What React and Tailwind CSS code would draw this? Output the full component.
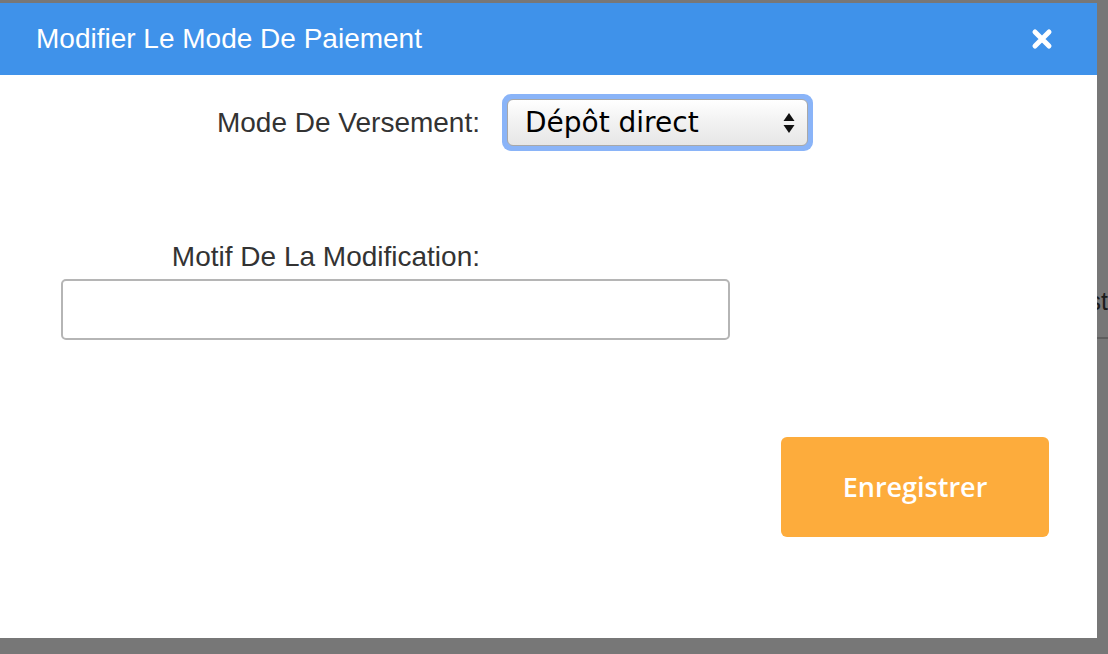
export default function App() {
  return (
    <div className="flex h-[654px] w-[1108px] overflow-hidden bg-[#777777]" style={{ fontFamily: '"Liberation Sans", Arial, sans-serif' }}>
      <div className="mt-[3px] flex h-[635px] w-[1097px] shrink-0 flex-col bg-white">
        <div className="flex h-[72px] items-center justify-between bg-[#3f92ea] pl-[36px] pr-[44px]">
          <h1 className="text-[28px] text-white">Modifier Le Mode De Paiement</h1>
          <svg width="22" height="22" viewBox="0 0 22 22">
            <path d="M4 4 L18 18 M18 4 L4 18" stroke="white" strokeWidth="5" strokeLinecap="round" />
          </svg>
        </div>
        <div className="flex flex-col">
          <div className="mt-[19px] flex items-center">
            <div className="w-[480px] text-right text-[28px] text-[#333333]">Mode De Versement:</div>
            <div className="ml-[22px] rounded-[9px] bg-[#8ab4f8] p-[5px]">
              <div className="flex h-[47px] w-[301px] items-center justify-between rounded-[6px] border border-[#a8a8a8] bg-[linear-gradient(#ffffff,#f4f4f4_40%,#e6e6e6)] pl-[17px] pr-[12px]">
                <span className="text-[28px] text-black" style={{ fontFamily: '"DejaVu Sans", Verdana, sans-serif' }}>Dépôt direct</span>
                <svg width="12" height="24" viewBox="0 0 12 24">
                  <path d="M6 2 L11.5 10 L0.5 10 Z M6 22 L11.5 14 L0.5 14 Z" fill="#111" />
                </svg>
              </div>
            </div>
          </div>
          <div className="mt-[85px] w-[480px] text-right text-[28px] text-[#333333]">Motif De La Modification:</div>
          <div className="ml-[61px] mt-[1px] h-[61px] w-[669px] rounded-[5px] border-2 border-[#b5b5b5]"></div>
          <div className="mt-[97px] flex justify-end pr-[48px]">
            <button className="h-[100px] w-[268px] rounded-[6px] bg-[#fdac3c] text-[27px] font-semibold text-white" style={{ fontFamily: '"Open Sans", sans-serif' }}>Enregistrer</button>
          </div>
        </div>
      </div>
      <div className="flex w-[11px] shrink-0 flex-col overflow-hidden">
        <div className="mt-[283px] flex h-[54px] justify-end">
          <span className="whitespace-nowrap text-[25px] text-[#1c1c1c]">st</span>
        </div>
        <div className="h-[2px] w-full bg-[#5e5e5e]"></div>
      </div>
    </div>
  );
}
